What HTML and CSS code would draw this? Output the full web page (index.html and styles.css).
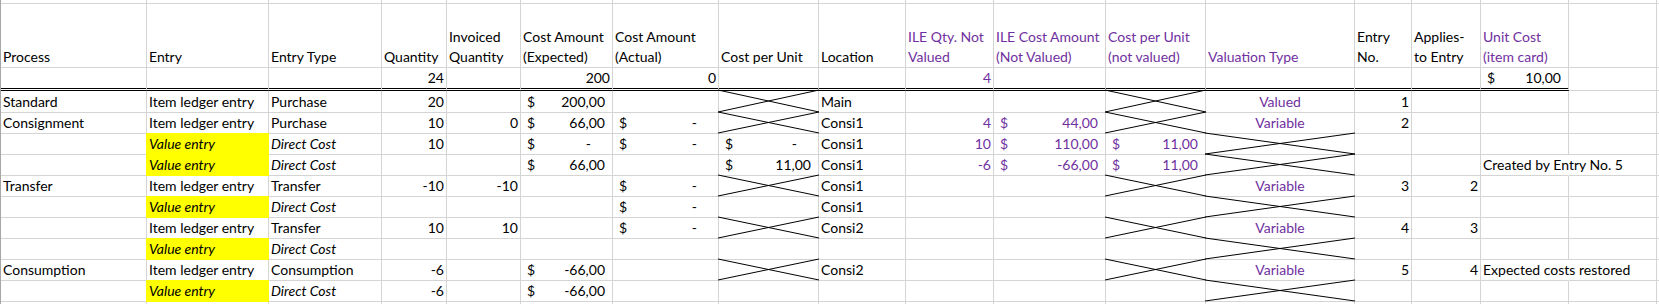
FILE: index.html
```html
<!DOCTYPE html>
<html>
<head>
<meta charset="utf-8">
<title>Sheet</title>
<link rel="stylesheet" href="styles.css">
</head>
<body>
<div class="sheet">
  <div class="row r-top">
    <div class="c"></div><div class="c"></div><div class="c"></div><div class="c"></div><div class="c"></div><div class="c"></div><div class="c"></div><div class="c"></div><div class="c"></div><div class="c"></div><div class="c"></div><div class="c"></div><div class="c"></div><div class="c"></div><div class="c"></div><div class="c"></div><div class="c"></div><div class="c"></div>
  </div>
  <div class="row r-head">
    <div class="c">Process</div>
    <div class="c">Entry</div>
    <div class="c">Entry Type</div>
    <div class="c">Quantity</div>
    <div class="c"><span>Invoiced<br>Quantity</span></div>
    <div class="c"><span>Cost Amount<br>(Expected)</span></div>
    <div class="c"><span>Cost Amount<br>(Actual)</span></div>
    <div class="c">Cost per Unit</div>
    <div class="c">Location</div>
    <div class="c pu"><span>ILE Qty. Not<br>Valued</span></div>
    <div class="c pu"><span>ILE Cost Amount<br>(Not Valued)</span></div>
    <div class="c pu"><span>Cost per Unit<br>(not valued)</span></div>
    <div class="c pu">Valuation Type</div>
    <div class="c"><span>Entry<br>No.</span></div>
    <div class="c"><span>Applies-<br>to Entry</span></div>
    <div class="c pu"><span>Unit Cost<br>(item card)</span></div>
    <div class="c"></div>
    <div class="c"></div>
  </div>
  <div class="row r-tot">
    <div class="c dbl"></div>
    <div class="c dbl"></div>
    <div class="c dbl"></div>
    <div class="c dbl num">24</div>
    <div class="c dbl"></div>
    <div class="c dbl num">200</div>
    <div class="c dbl num">0</div>
    <div class="c dbl"></div>
    <div class="c dbl"></div>
    <div class="c dbl num pu">4</div>
    <div class="c dbl"></div>
    <div class="c dbl"></div>
    <div class="c dbl"></div>
    <div class="c dbl"></div>
    <div class="c dbl"></div>
    <div class="c dbl acc"><span>$</span><span>10,00</span></div>
    <div class="c"></div>
    <div class="c"></div>
  </div>

  <div class="row r-first">
    <div class="c">Standard</div>
    <div class="c">Item ledger entry</div>
    <div class="c">Purchase</div>
    <div class="c num">20</div>
    <div class="c"></div>
    <div class="c acc"><span>$</span><span>200,00</span></div>
    <div class="c"></div>
    <div class="c x"><svg viewBox="0 0 10 10" preserveAspectRatio="none"><path d="M0 0L10 10M0 10L10 0"/></svg></div>
    <div class="c">Main</div>
    <div class="c"></div>
    <div class="c"></div>
    <div class="c x"><svg viewBox="0 0 10 10" preserveAspectRatio="none"><path d="M0 0L10 10M0 10L10 0"/></svg></div>
    <div class="c ctr pu">Valued</div>
    <div class="c num">1</div>
    <div class="c"></div>
    <div class="c"></div>
    <div class="c"></div>
    <div class="c"></div>
  </div>

  <div class="row">
    <div class="c">Consignment</div>
    <div class="c">Item ledger entry</div>
    <div class="c">Purchase</div>
    <div class="c num">10</div>
    <div class="c num">0</div>
    <div class="c acc"><span>$</span><span>66,00</span></div>
    <div class="c acc"><span>$</span><span class="z">-</span></div>
    <div class="c x"><svg viewBox="0 0 10 10" preserveAspectRatio="none"><path d="M0 0L10 10M0 10L10 0"/></svg></div>
    <div class="c">Consi1</div>
    <div class="c num pu">4</div>
    <div class="c acc pu"><span>$</span><span>44,00</span></div>
    <div class="c x"><svg viewBox="0 0 10 10" preserveAspectRatio="none"><path d="M0 0L10 10M0 10L10 0"/></svg></div>
    <div class="c ctr pu">Variable</div>
    <div class="c num">2</div>
    <div class="c"></div>
    <div class="c"></div>
    <div class="c"></div>
    <div class="c"></div>
  </div>

  <div class="row">
    <div class="c"></div>
    <div class="c hl it">Value entry</div>
    <div class="c it">Direct Cost</div>
    <div class="c num">10</div>
    <div class="c"></div>
    <div class="c acc"><span>$</span><span class="z">-</span></div>
    <div class="c acc"><span>$</span><span class="z">-</span></div>
    <div class="c acc"><span>$</span><span class="z">-</span></div>
    <div class="c">Consi1</div>
    <div class="c num pu">10</div>
    <div class="c acc pu"><span>$</span><span>110,00</span></div>
    <div class="c acc pu"><span>$</span><span>11,00</span></div>
    <div class="c x"><svg viewBox="0 0 10 10" preserveAspectRatio="none"><path d="M0 0L10 10M0 10L10 0"/></svg></div>
    <div class="c"></div>
    <div class="c"></div>
    <div class="c"></div>
    <div class="c"></div>
    <div class="c"></div>
  </div>

  <div class="row">
    <div class="c"></div>
    <div class="c hl it">Value entry</div>
    <div class="c it">Direct Cost</div>
    <div class="c"></div>
    <div class="c"></div>
    <div class="c acc"><span>$</span><span>66,00</span></div>
    <div class="c"></div>
    <div class="c acc"><span>$</span><span>11,00</span></div>
    <div class="c">Consi1</div>
    <div class="c num pu">-6</div>
    <div class="c acc pu"><span>$</span><span>-66,00</span></div>
    <div class="c acc pu"><span>$</span><span>11,00</span></div>
    <div class="c x"><svg viewBox="0 0 10 10" preserveAspectRatio="none"><path d="M0 0L10 10M0 10L10 0"/></svg></div>
    <div class="c"></div>
    <div class="c"></div>
    <div class="c spill">Created by Entry No. 5</div>
    <div class="c"></div>
    <div class="c"></div>
  </div>

  <div class="row">
    <div class="c">Transfer</div>
    <div class="c">Item ledger entry</div>
    <div class="c">Transfer</div>
    <div class="c num">-10</div>
    <div class="c num">-10</div>
    <div class="c"></div>
    <div class="c acc"><span>$</span><span class="z">-</span></div>
    <div class="c x"><svg viewBox="0 0 10 10" preserveAspectRatio="none"><path d="M0 0L10 10M0 10L10 0"/></svg></div>
    <div class="c">Consi1</div>
    <div class="c"></div>
    <div class="c"></div>
    <div class="c x"><svg viewBox="0 0 10 10" preserveAspectRatio="none"><path d="M0 0L10 10M0 10L10 0"/></svg></div>
    <div class="c ctr pu">Variable</div>
    <div class="c num">3</div>
    <div class="c num">2</div>
    <div class="c"></div>
    <div class="c"></div>
    <div class="c"></div>
  </div>

  <div class="row">
    <div class="c"></div>
    <div class="c hl it">Value entry</div>
    <div class="c it">Direct Cost</div>
    <div class="c"></div>
    <div class="c"></div>
    <div class="c"></div>
    <div class="c acc"><span>$</span><span class="z">-</span></div>
    <div class="c"></div>
    <div class="c">Consi1</div>
    <div class="c"></div>
    <div class="c"></div>
    <div class="c"></div>
    <div class="c x"><svg viewBox="0 0 10 10" preserveAspectRatio="none"><path d="M0 0L10 10M0 10L10 0"/></svg></div>
    <div class="c"></div>
    <div class="c"></div>
    <div class="c"></div>
    <div class="c"></div>
    <div class="c"></div>
  </div>

  <div class="row">
    <div class="c"></div>
    <div class="c">Item ledger entry</div>
    <div class="c">Transfer</div>
    <div class="c num">10</div>
    <div class="c num">10</div>
    <div class="c"></div>
    <div class="c acc"><span>$</span><span class="z">-</span></div>
    <div class="c x"><svg viewBox="0 0 10 10" preserveAspectRatio="none"><path d="M0 0L10 10M0 10L10 0"/></svg></div>
    <div class="c">Consi2</div>
    <div class="c"></div>
    <div class="c"></div>
    <div class="c x"><svg viewBox="0 0 10 10" preserveAspectRatio="none"><path d="M0 0L10 10M0 10L10 0"/></svg></div>
    <div class="c ctr pu">Variable</div>
    <div class="c num">4</div>
    <div class="c num">3</div>
    <div class="c"></div>
    <div class="c"></div>
    <div class="c"></div>
  </div>

  <div class="row">
    <div class="c"></div>
    <div class="c hl it">Value entry</div>
    <div class="c it">Direct Cost</div>
    <div class="c"></div>
    <div class="c"></div>
    <div class="c"></div>
    <div class="c"></div>
    <div class="c"></div>
    <div class="c"></div>
    <div class="c"></div>
    <div class="c"></div>
    <div class="c"></div>
    <div class="c x"><svg viewBox="0 0 10 10" preserveAspectRatio="none"><path d="M0 0L10 10M0 10L10 0"/></svg></div>
    <div class="c"></div>
    <div class="c"></div>
    <div class="c"></div>
    <div class="c"></div>
    <div class="c"></div>
  </div>

  <div class="row">
    <div class="c">Consumption</div>
    <div class="c">Item ledger entry</div>
    <div class="c">Consumption</div>
    <div class="c num">-6</div>
    <div class="c"></div>
    <div class="c acc"><span>$</span><span>-66,00</span></div>
    <div class="c"></div>
    <div class="c x"><svg viewBox="0 0 10 10" preserveAspectRatio="none"><path d="M0 0L10 10M0 10L10 0"/></svg></div>
    <div class="c">Consi2</div>
    <div class="c"></div>
    <div class="c"></div>
    <div class="c x"><svg viewBox="0 0 10 10" preserveAspectRatio="none"><path d="M0 0L10 10M0 10L10 0"/></svg></div>
    <div class="c ctr pu">Variable</div>
    <div class="c num">5</div>
    <div class="c num">4</div>
    <div class="c spill">Expected costs restored</div>
    <div class="c"></div>
    <div class="c"></div>
  </div>

  <div class="row">
    <div class="c"></div>
    <div class="c hl it">Value entry</div>
    <div class="c it">Direct Cost</div>
    <div class="c num">-6</div>
    <div class="c"></div>
    <div class="c acc"><span>$</span><span>-66,00</span></div>
    <div class="c"></div>
    <div class="c"></div>
    <div class="c"></div>
    <div class="c"></div>
    <div class="c"></div>
    <div class="c"></div>
    <div class="c x"><svg viewBox="0 0 10 10" preserveAspectRatio="none"><path d="M0 0L10 10M0 10L10 0"/></svg></div>
    <div class="c"></div>
    <div class="c"></div>
    <div class="c"></div>
    <div class="c"></div>
    <div class="c"></div>
  </div>

  <div class="row">
    <div class="c"></div><div class="c"></div><div class="c"></div><div class="c"></div><div class="c"></div><div class="c"></div><div class="c"></div><div class="c"></div><div class="c"></div><div class="c"></div><div class="c"></div><div class="c"></div><div class="c"></div><div class="c"></div><div class="c"></div><div class="c"></div><div class="c"></div><div class="c"></div>
  </div>
</div>
</body>
</html>
```

FILE: styles.css
```css
html, body {
  margin: 0;
  padding: 0;
  background: #fff;
}

body {
  font-family: Lato, "Open Sans", "DejaVu Sans", sans-serif;
  font-size: 14px;
  color: #000;
  overflow: hidden;
  width: 1659px;
  height: 304px;
}

.sheet {
  display: flex;
  flex-direction: column;
}

.row {
  display: grid;
  grid-template-columns: 146px 122px 113px 65px 74px 92px 106px 100px 87px 88px 112px 100px 149px 57px 69px 88px 88px 1fr;
  grid-template-rows: minmax(0, 1fr);
  height: 21px;
  border-left: 1px solid #a6a6a6;
  flex: none;
}

.r-top { height: 4px; }
.r-head { height: 64px; }
.r-tot { height: 23px; }
.r-first { height: 22px; }

.c {
  box-sizing: border-box;
  border-right: 1px solid #d4d4d4;
  border-bottom: 1px solid #d4d4d4;
  padding: 0 2px;
  line-height: 20px;
  white-space: nowrap;
  display: flex;
  align-items: flex-end;
  min-width: 0;
  min-height: 0;
  overflow: hidden;
}

.dbl {
  border-bottom: 3px double #000;
}

.num { justify-content: flex-end; }
.ctr { justify-content: center; }
.pu { color: #7030a0; }
.it { font-style: italic; }

.acc {
  justify-content: space-between;
  padding: 0 7px 0 6px;
}

.acc .z {
  padding-right: 14px;
}

.hl {
  background: #ffff00;
  border-right-color: #ffff00;
  border-bottom-color: #ffff00;
  box-shadow: -1px 0 0 #ffff00, 0 -1px 0 #ffff00, -1px -1px 0 #ffff00;
}

.spill {
  overflow: visible;
  border-right-color: transparent;
}

.x {
  display: block;
  padding: 0;
  overflow: visible;
  position: relative;
}

.x svg {
  position: absolute;
  left: -1px;
  top: -1px;
  width: calc(100% + 2px);
  height: calc(100% + 1px);
  overflow: visible;
}

.x path {
  fill: none;
  stroke: #000;
  stroke-width: 1;
  vector-effect: non-scaling-stroke;
}
```
